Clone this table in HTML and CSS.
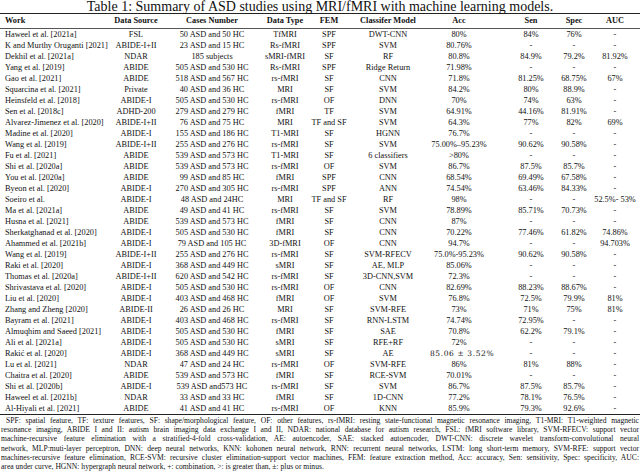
FILE: index.html
```html
<!DOCTYPE html>
<html lang="en">
<head>
<meta charset="utf-8">
<title>Table 1</title>
<link rel="stylesheet" href="styles.css">
</head>
<body>
<div class="caption">Table 1: Summary of ASD studies using MRI/fMRI with machine learning models.</div>
<table class="tbl">
<colgroup>
<col class="c-work"><col class="c-ds"><col class="c-cn"><col class="c-dt"><col class="c-fem"><col class="c-cm"><col class="c-acc"><col class="c-sen"><col class="c-spec"><col class="c-auc">
</colgroup>
<thead>
<tr><th class="work">Work</th><th>Data Source</th><th>Cases Number</th><th>Data Type</th><th>FEM</th><th>Classifer Model</th><th>Acc</th><th>Sen</th><th>Spec</th><th>AUC</th></tr>
</thead>
<tbody>
<tr><td class="work">Haweel et al. [2021a]</td><td>FSL</td><td>50 ASD and 50 HC</td><td>TfMRI</td><td>SPF</td><td>DWT-CNN</td><td>80%</td><td>84%</td><td>76%</td><td>-</td></tr>
<tr><td class="work">K and Murthy Oruganti [2021]</td><td>ABIDE-I+II</td><td>23 ASD and 15 HC</td><td>Rs-fMRI</td><td>SPF</td><td>SVM</td><td>80.76%</td><td>-</td><td>-</td><td>-</td></tr>
<tr><td class="work">Dekhil et al. [2021a]</td><td>NDAR</td><td>185 subjects</td><td>sMRI-fMRI</td><td>SF</td><td>RF</td><td>80.8%</td><td>84.9%</td><td>79.2%</td><td>81.92%</td></tr>
<tr><td class="work">Yang et al. [2019]</td><td>ABIDE</td><td>505 ASD and 530 HC</td><td>Rs-fMRI</td><td>SPF</td><td>Ridge Return</td><td>71.98%</td><td>-</td><td>-</td><td>-</td></tr>
<tr><td class="work">Gao et al. [2021]</td><td>ABIDE</td><td>518 ASD and 567 HC</td><td>rs-fMRI</td><td>SF</td><td>CNN</td><td>71.8%</td><td>81.25%</td><td>68.75%</td><td>67%</td></tr>
<tr><td class="work">Squarcina et al. [2021]</td><td>Private</td><td>40 ASD and 36 HC</td><td>MRI</td><td>SF</td><td>SVM</td><td>84.2%</td><td>80%</td><td>88.9%</td><td>-</td></tr>
<tr><td class="work">Heinsfeld et al. [2018]</td><td>ABIDE-I</td><td>505 ASD and 530 HC</td><td>rs-fMRI</td><td>OF</td><td>DNN</td><td>70%</td><td>74%</td><td>63%</td><td>-</td></tr>
<tr><td class="work">Sen et al. [2018c]</td><td>ADHD-200</td><td>279 ASD and 279 HC</td><td>fMRI</td><td>TF</td><td>SVM</td><td>64.91%</td><td>44.16%</td><td>81.91%</td><td>-</td></tr>
<tr><td class="work">Alvarez-Jimenez et al. [2020]</td><td>ABIDE-I+II</td><td>76 ASD and 75 HC</td><td>MRI</td><td>TF and SF</td><td>SVM</td><td>64.3%</td><td>77%</td><td>82%</td><td>69%</td></tr>
<tr><td class="work">Madine et al. [2020]</td><td>ABIDE-I</td><td>155 ASD and 186 HC</td><td>T1-MRI</td><td>SF</td><td>HGNN</td><td>76.7%</td><td>-</td><td>-</td><td>-</td></tr>
<tr><td class="work">Wang et al. [2019]</td><td>ABIDE-I+II</td><td>255 ASD and 276 HC</td><td>rs-fMRI</td><td>SF</td><td>SVM</td><td>75.00%–95.23%</td><td>90.62%</td><td>90.58%</td><td>-</td></tr>
<tr><td class="work">Fu et al. [2021]</td><td>ABIDE</td><td>539 ASD and 573 HC</td><td>T1-MRI</td><td>SF</td><td>6 classifiers</td><td>&gt;80%</td><td>-</td><td>-</td><td>-</td></tr>
<tr><td class="work">Shi et al. [2020a]</td><td>ABIDE</td><td>539 ASD and 573 HC</td><td>rs-fMRI</td><td>OF</td><td>SVM</td><td>86.7%</td><td>87.5%</td><td>85.7%</td><td>-</td></tr>
<tr><td class="work">You et al. [2020a]</td><td>ABIDE</td><td>99 ASD and 85 HC</td><td>fMRI</td><td>SPF</td><td>CNN</td><td>68.54%</td><td>69.49%</td><td>67.58%</td><td>-</td></tr>
<tr><td class="work">Byeon et al. [2020]</td><td>ABIDE-I</td><td>270 ASD and 305 HC</td><td>rs-fMRI</td><td>SPF</td><td>ANN</td><td>74.54%</td><td>63.46%</td><td>84.33%</td><td>-</td></tr>
<tr><td class="work">Soeiro et al.</td><td>ABIDE-I</td><td>48 ASD and 24HC</td><td>MRI</td><td>TF and SF</td><td>RF</td><td>98%</td><td>-</td><td>-</td><td>52.5%- 53%</td></tr>
<tr><td class="work">Ma et al. [2021a]</td><td>ABIDE</td><td>49 ASD and 41 HC</td><td>rs-fMRI</td><td>SF</td><td>SVM</td><td>78.89%</td><td>85.71%</td><td>70.73%</td><td>-</td></tr>
<tr><td class="work">Husna et al. [2021]</td><td>ABIDE</td><td>539 ASD and 573 HC</td><td>fMRI</td><td>SF</td><td>CNN</td><td>87%</td><td>-</td><td>-</td><td>-</td></tr>
<tr><td class="work">Sherkatghanad et al. [2020]</td><td>ABIDE-I</td><td>505 ASD and 530 HC</td><td>fMRI</td><td>SF</td><td>CNN</td><td>70.22%</td><td>77.46%</td><td>61.82%</td><td>74.86%</td></tr>
<tr><td class="work">Ahammed et al. [2021b]</td><td>ABIDE-I</td><td>79 ASD and 105 HC</td><td>3D-fMRI</td><td>OF</td><td>CNN</td><td>94.7%</td><td>-</td><td>-</td><td>94.703%</td></tr>
<tr><td class="work">Wang et al. [2019]</td><td>ABIDE-I+II</td><td>255 ASD and 276 HC</td><td>rs-fMRI</td><td>SF</td><td>SVM-RFECV</td><td>75.0%-95.23%</td><td>90.62%</td><td>90.58%</td><td>-</td></tr>
<tr><td class="work">Raki et al. [2020]</td><td>ABIDE-I</td><td>368 ASD and 449 HC</td><td>sMRI</td><td>SF</td><td>AE, MLP</td><td>85.06%</td><td>-</td><td>-</td><td>-</td></tr>
<tr><td class="work">Thomas et al. [2020a]</td><td>ABIDE-I+II</td><td>620 ASD and 542 HC</td><td>rs-fMRI</td><td>SF</td><td>3D-CNN,SVM</td><td>72.3%</td><td>-</td><td>-</td><td>-</td></tr>
<tr><td class="work">Shrivastava et al. [2020]</td><td>ABIDE-I</td><td>505 ASD and 530 HC</td><td>rs-fMRI</td><td>OF</td><td>CNN</td><td>82.69%</td><td>88.23%</td><td>88.67%</td><td>-</td></tr>
<tr><td class="work">Liu et al. [2020]</td><td>ABIDE-I</td><td>403 ASD and 468 HC</td><td>fMRI</td><td>OF</td><td>SVM</td><td>76.8%</td><td>72.5%</td><td>79.9%</td><td>81%</td></tr>
<tr><td class="work">Zhang and Zheng [2020]</td><td>ABIDE-II</td><td>26 ASD and 26 HC</td><td>MRI</td><td>SF</td><td>SVM-RFE</td><td>73%</td><td>71%</td><td>75%</td><td>81%</td></tr>
<tr><td class="work">Bayram et al. [2021]</td><td>ABIDE-I</td><td>403 ASD and 468 HC</td><td>rs-fMRI</td><td>SF</td><td>RNN-LSTM</td><td>74.74%</td><td>72.95%</td><td>-</td><td>-</td></tr>
<tr><td class="work">Almuqhim and Saeed [2021]</td><td>ABIDE-I</td><td>505 ASD and 530 HC</td><td>fMRI</td><td>SF</td><td>SAE</td><td>70.8%</td><td>62.2%</td><td>79.1%</td><td>-</td></tr>
<tr><td class="work">Ali et al. [2021a]</td><td>ABIDE-I</td><td>505 ASD and 530 HC</td><td>sMRI</td><td>SF</td><td>RFE+RF</td><td>72%</td><td>-</td><td>-</td><td>-</td></tr>
<tr><td class="work">Rakić et al. [2020]</td><td>ABIDE-I</td><td>368 ASD and 449 HC</td><td>sMRI</td><td>SF</td><td>AE</td><td class="math">85.06 ± 3.52%</td><td>-</td><td>-</td><td>-</td></tr>
<tr><td class="work">Lu et al. [2021]</td><td>NDAR</td><td>47 ASD and 24 HC</td><td>rs-fMRI</td><td>OF</td><td>SVM-RFE</td><td>86%</td><td>81%</td><td>88%</td><td>-</td></tr>
<tr><td class="work">Chaitra et al. [2020]</td><td>ABIDE</td><td>539 ASD and 573 HC</td><td>fMRI</td><td>SF</td><td>RCE-SVM</td><td>70.01%</td><td>-</td><td>-</td><td>-</td></tr>
<tr><td class="work">Shi et al. [2020b]</td><td>ABIDE-I</td><td>539 ASD and573 HC</td><td>rs-fMRI</td><td>SF</td><td>SVM</td><td>86.7%</td><td>87.5%</td><td>85.7%</td><td>-</td></tr>
<tr><td class="work">Haweel et al. [2021b]</td><td>NDAR</td><td>33 ASD and 33 HC</td><td>fMRI</td><td>SF</td><td>1D-CNN</td><td>77.2%</td><td>78.1%</td><td>76.5%</td><td>-</td></tr>
<tr><td class="work">Al-Hiyali et al. [2021]</td><td>ABIDE</td><td>41 ASD and 41 HC</td><td>rs-fMRI</td><td>OF</td><td>KNN</td><td>85.9%</td><td>79.3%</td><td>92.6%</td><td>-</td></tr>
</tbody>
</table>
<div class="note">
<div class="ln first">SPF: spatial feature, TF: texture features, SF: shape/morphological feature, OF: other features, rs-fMRI: resting state-functional magnetic resonance imaging, T1-MRI: T1-weighted magnetic</div>
<div class="ln">resonance imaging, ABIDE I and II: autism brain imaging data exchange I and II, NDAR: national database for autism research, FSL: fMRI software library, SVM-RFECV: support vector</div>
<div class="ln">machine-recursive feature elimination with a stratified-4-fold cross-validation, AE: autoencoder, SAE: stacked autoencoder, DWT-CNN: discrete wavelet transform-convolutional neural</div>
<div class="ln">network, MLP:muti-layer perceptron, DNN: deep neural networks, KNN: kohonen neural network, RNN: recurrent neural networks, LSTM: long short-term memory, SVM-RFE: support vector</div>
<div class="ln">machines-recursive feature elimination, RCE-SVM: recursive cluster elimination-support vector machines, FEM: feature extraction method, Acc: accuracy, Sen: sensitivity, Spec: specificity, AUC:</div>
<div class="ln last">area under curve, HGNN: hypergraph neural network, +: combination, &gt;: is greater than, ±: plus or minus.</div>
</div>
</body>
</html>
```
FILE: styles.css
```css
html, body {
  margin: 0;
  padding: 0;
  background: #ffffff;
}
body {
  width: 640px;
  height: 475px;
  overflow: hidden;
  font-family: "Liberation Serif", "Times New Roman", serif;
  color: #111111;
}
.caption {
  font-size: 14px;
  line-height: 13px;
  height: 13px;
  text-align: center;
  white-space: nowrap;
}
.tbl {
  width: 640px;
  table-layout: fixed;
  border-collapse: collapse;
  font-size: 8.3px;
}
.c-work { width: 106px; }
.c-ds { width: 60px; }
.c-cn { width: 88px; }
.c-dt { width: 54px; }
.c-fem { width: 42px; }
.c-cm { width: 76px; }
.c-acc { width: 62px; }
.c-sen { width: 62px; }
.c-spec { width: 44px; }
.c-auc { width: 46px; }
.tbl thead tr {
  border-top: 1.5px solid #222222;
  border-bottom: 0.8px solid #555555;
}
.tbl th {
  font-weight: bold;
  padding: 0;
  height: 14px;
  line-height: 14px;
  text-align: center;
  white-space: nowrap;
}
.tbl td {
  padding: 0;
  height: 11px;
  line-height: 11px;
  text-align: center;
  white-space: nowrap;
}
.tbl th:nth-child(3),
.tbl td:nth-child(3) {
  padding-left: 4px;
}
.tbl th:nth-child(4),
.tbl td:nth-child(4) {
  padding-left: 8px;
}
.tbl th:nth-child(7),
.tbl td:nth-child(7) {
  padding-left: 4px;
}
.tbl th:nth-child(8),
.tbl td:nth-child(8) {
  padding-left: 24px;
}
.tbl th:nth-child(9),
.tbl td:nth-child(9) {
  padding-left: 4px;
}
.tbl th:nth-child(10),
.tbl td:nth-child(10) {
  padding-right: 4px;
}
.tbl .work {
  text-align: left;
  padding-left: 5px;
}
.tbl tbody tr:last-child {
  border-bottom: 1.5px solid #222222;
}
.tbl .math {
  font-family: "DejaVu Serif", serif;
  font-size: 7.5px;
  letter-spacing: 0.6px;
}
.note {
  font-size: 7.6px;
  line-height: 9.2px;
  padding: 1px 1px 0 1px;
}
.ln {
  text-align: justify;
  text-align-last: justify;
}
.ln.first {
  text-indent: 5px;
}
.ln.last {
  text-align-last: left;
}
```
